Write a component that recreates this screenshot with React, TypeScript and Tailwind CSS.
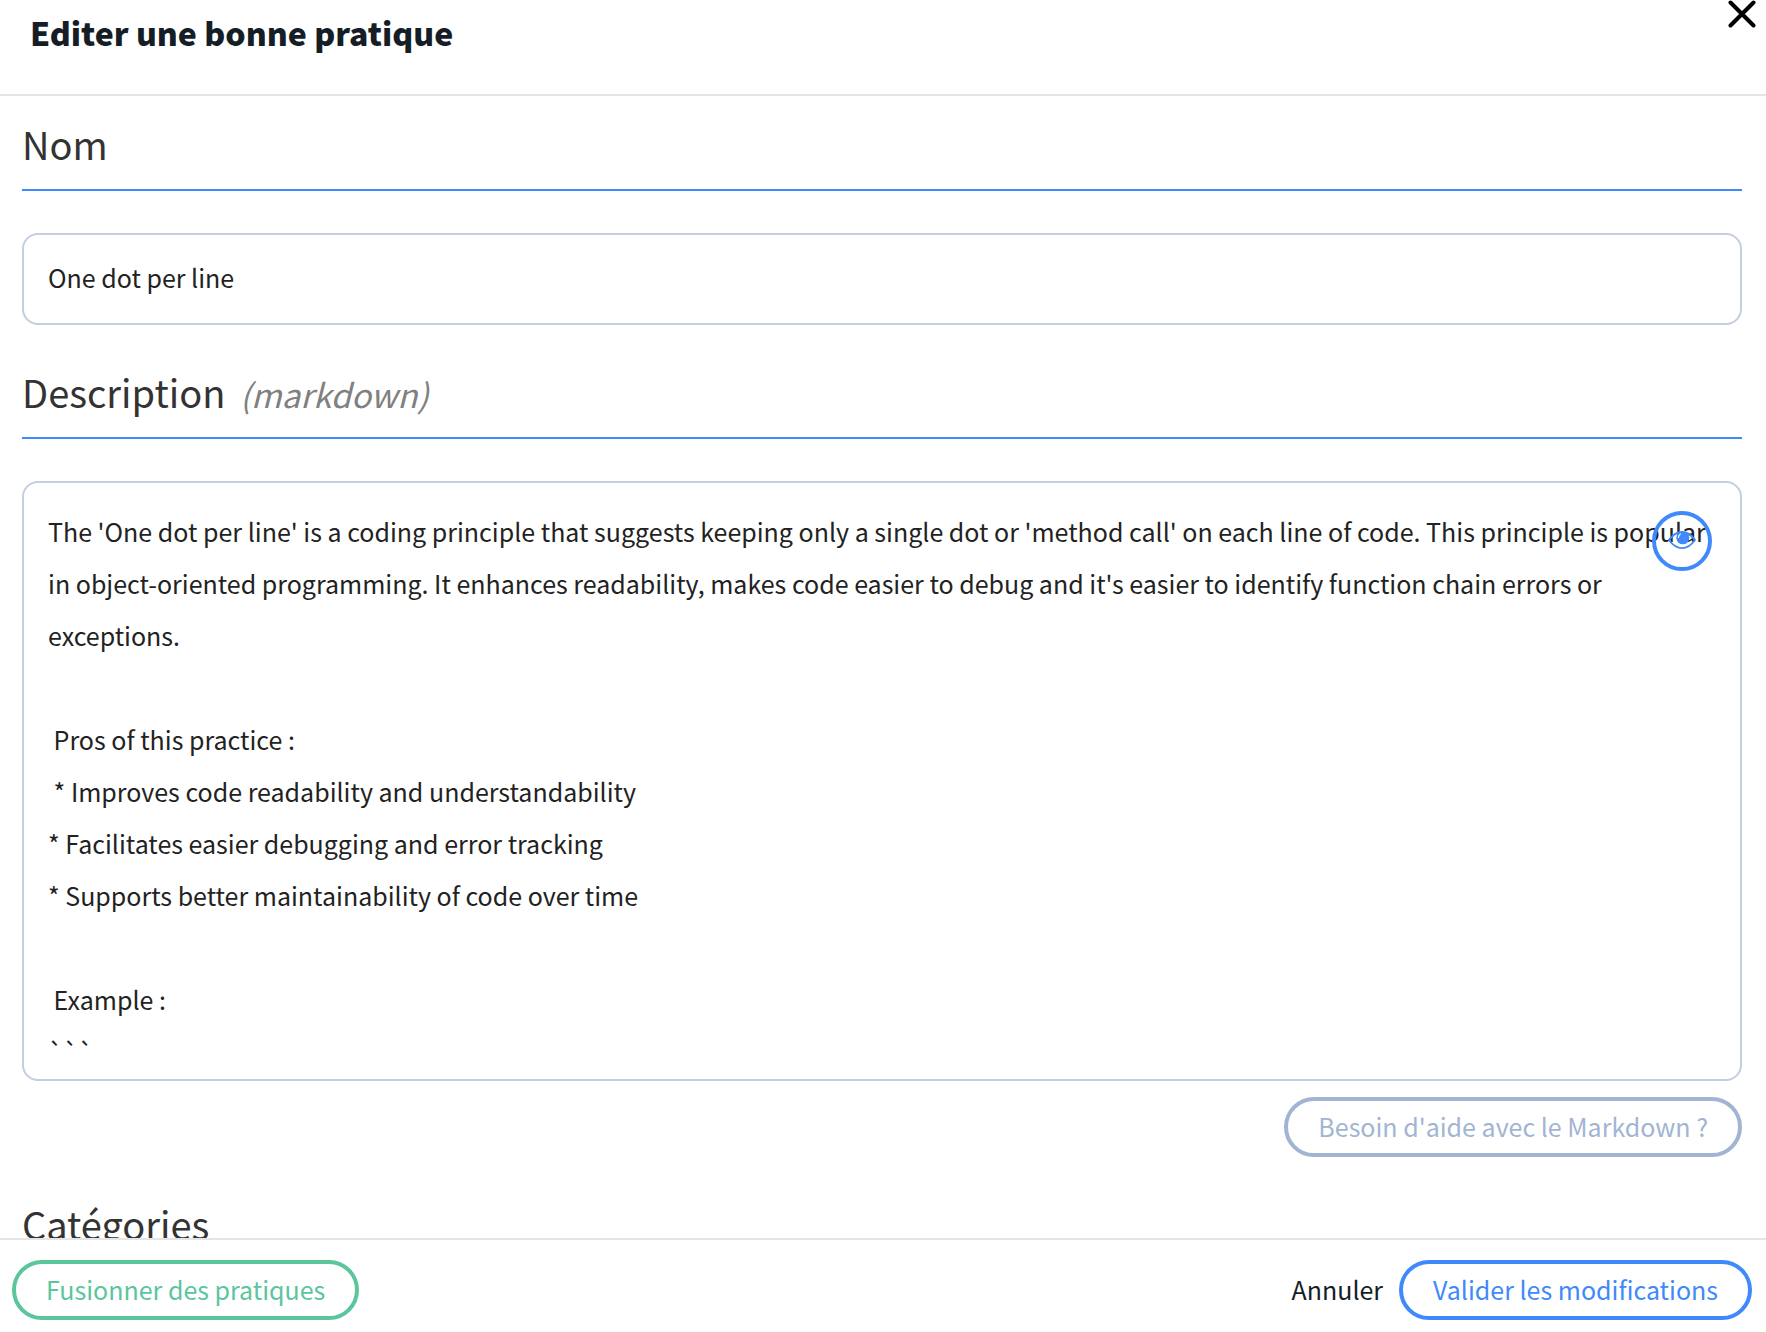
import { useState } from "react";

const INITIAL_DESCRIPTION = `The 'One dot per line' is a coding principle that suggests keeping only a single dot or 'method call' on each line of code. This principle is popular in object-oriented programming. It enhances readability, makes code easier to debug and it's easier to identify function chain errors or exceptions.

 Pros of this practice :
 * Improves code readability and understandability
* Facilitates easier debugging and error tracking
* Supports better maintainability of code over time

 Example :
\`\`\``;

const fieldClass =
  "block w-full resize-none overflow-hidden rounded-2xl border-2 border-[#c3cee1] bg-white px-6 text-[25px] text-[#222222] outline-none";
const headingClass =
  "border-b-2 border-[#4089fa] pb-[17px] text-[38px] leading-[56px] font-normal text-[#333333]";
const pillClass =
  "h-15 rounded-full border-4 px-[30px] pb-0.5 text-[25px] leading-[50px] whitespace-nowrap";

function CloseIcon() {
  return (
    <svg viewBox="0 0 28 28" className="size-7" fill="none" stroke="#000" strokeWidth="4" strokeLinecap="round" aria-hidden="true">
      <path d="M2.5 2.5 25.5 25.5M25.5 2.5 2.5 25.5" />
    </svg>
  );
}

function EyeIcon() {
  return (
    <svg viewBox="0 0 28 20" className="h-5 w-7" aria-hidden="true">
      <path d="M1 9C5 3.5 9 1 14 1S23 3.5 27 9C23 14.5 19 17.200 14 17.200S5 14.500 1 9Z" fill="none" stroke="#4089fa" strokeWidth="1.8" />
      <circle cx="14.800" cy="6.800" r="6.500" fill="#4089fa" />
      <path d="M10.500 6.500C10.500 4.800 11.200 3.600 12.500 3" fill="none" stroke="#fff" strokeWidth="1.2" strokeLinecap="round" />
    </svg>
  );
}

export default function App() {
  const [name, setName] = useState("One dot per line");
  const [description, setDescription] = useState(INITIAL_DESCRIPTION);

  return (
    <div className="flex h-screen flex-col bg-white font-['Noto_Sans_CJK_JP',sans-serif]">
      <header className="flex shrink-0 items-start justify-between border-b-2 border-[#e5e5e5] pr-2.5 pb-[30px] pl-[30px]">
        <h1 className="text-[32px] leading-[64px] font-black text-[#151e26]">Editer une bonne pratique</h1>
        <button type="button" aria-label="Fermer">
          <CloseIcon />
        </button>
      </header>

      <main className="min-h-0 flex-1 overflow-hidden pt-5 pr-6 pl-[22px]">
        <h2 className={headingClass}>
          <label htmlFor="practice-name">Nom</label>
        </h2>
        <input
          id="practice-name"
          className={`${fieldClass} mt-[42px] h-[92px] pb-1`}
          value={name}
          onChange={(e) => setName(e.target.value)}
        />

        <h2 className={`${headingClass} mt-[39px]`}>
          <label htmlFor="practice-description">
            Description <em className="ml-1.5 text-[33px] leading-none text-[#808080]">(markdown)</em>
          </label>
        </h2>
        <div className="relative mt-[42px]">
          <textarea
            id="practice-description"
            className={`${fieldClass} h-[600px] pt-[22px] leading-[52px]`}
            value={description}
            onChange={(e) => setDescription(e.target.value)}
          />
          <button
            type="button"
            aria-label="Aperçu"
            className="absolute top-[30px] right-[30px] flex size-15 items-center justify-center rounded-full border-4 border-[#4089fa]"
          >
            <EyeIcon />
          </button>
        </div>
        <div className="mt-4 flex justify-end">
          <button type="button" className={`${pillClass} border-[#a1b5d3] text-[#a1b5d3]`}>
            Besoin d'aide avec le Markdown ?
          </button>
        </div>

        <h2 className={`${headingClass} mt-[39px]`}>Catégories</h2>
      </main>

      <footer className="flex shrink-0 items-center justify-between border-t-2 border-[#e5e5e5] pt-5 pr-3.5 pb-3 pl-3">
        <button type="button" className={`${pillClass} border-[#5bc59c] text-[#5bc59c]`}>
          Fusionner des pratiques
        </button>
        <div className="flex items-center gap-4">
          <button type="button" className="text-[25px] text-[#151e26]">
            Annuler
          </button>
          <button type="button" className={`${pillClass} border-[#4089fa] text-[#4089fa]`}>
            Valider les modifications
          </button>
        </div>
      </footer>
    </div>
  );
}
